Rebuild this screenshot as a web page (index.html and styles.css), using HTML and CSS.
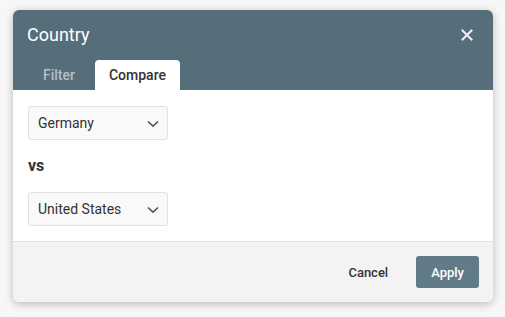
FILE: index.html
```html
<!DOCTYPE html>
<html>
<head>
<meta charset="utf-8">
<link rel="stylesheet" href="styles.css">
</head>
<body>
<div class="dialog">
  <div class="header">
    <div class="title-row">
      <span class="title">Country</span>
      <button class="close" aria-label="Close">
        <svg width="12" height="12" viewBox="0 0 12 12"><path d="M1.5 1.5L10.5 10.5M10.5 1.5L1.5 10.5" stroke="#eef1f3" stroke-width="2" stroke-linecap="square" fill="none"/></svg>
      </button>
    </div>
    <div class="tabs">
      <div class="tab">Filter</div>
      <div class="tab active">Compare</div>
    </div>
  </div>
  <div class="body">
    <div class="select"><span>Germany</span>
      <svg width="12" height="8" viewBox="0 0 12 8"><path d="M1 1.5L6 6.2L11 1.5" stroke="#555" stroke-width="1.6" fill="none"/></svg>
    </div>
    <div class="vs">vs</div>
    <div class="select"><span>United States</span>
      <svg width="12" height="8" viewBox="0 0 12 8"><path d="M1 1.5L6 6.2L11 1.5" stroke="#555" stroke-width="1.6" fill="none"/></svg>
    </div>
  </div>
  <div class="footer">
    <button class="btn cancel">Cancel</button>
    <button class="btn apply">Apply</button>
  </div>
</div>
</body>
</html>
```
FILE: styles.css
```css
html, body { margin: 0; }
body {
  background: #f7f7f7;
  font-family: Roboto, "Liberation Sans", sans-serif;
  padding: 10px 0 0 13px;
  width: 505px;
  height: 317px;
  box-sizing: border-box;
}
.dialog {
  width: 480px;
  border-radius: 6px;
  overflow: hidden;
  background: #fff;
  box-shadow: 0 2px 8px rgba(0,0,0,0.25);
}
.header {
  background: #566d7a;
  padding: 13px 0 0 0;
}
.title-row {
  display: flex;
  align-items: center;
  justify-content: space-between;
  padding: 0 20px 0 14px;
  height: 24px;
}
.title {
  color: #fff;
  font-size: 18px;
  line-height: 24px;
}
.close {
  background: none;
  border: 0;
  padding: 0;
  display: flex;
}
.tabs {
  display: flex;
  gap: 6px;
  padding: 13px 0 0 16px;
}
.tab {
  height: 30px;
  line-height: 30px;
  padding: 0 14px;
  font-size: 14px;
  font-weight: 500;
  color: #b3c0c7;
  border-radius: 4px 4px 0 0;
}
.tab.active {
  background: #fff;
  color: #333;
}
.body {
  padding: 16px 15px 15px;
  display: flex;
  flex-direction: column;
  align-items: flex-start;
}
.select {
  width: 140px;
  height: 34px;
  box-sizing: border-box;
  border: 1px solid #e2e2e2;
  border-radius: 3px;
  background: #f9f9f9;
  display: flex;
  align-items: center;
  justify-content: space-between;
  padding: 0 8px 0 9px;
  font-size: 14px;
  color: #333;
}
.select svg { margin-top: 1px; }
.vs {
  font-size: 16px;
  font-weight: 700;
  color: #333;
  line-height: 20px;
  margin: 16px 0 16px 0;
}
.footer {
  background: #f3f3f3;
  border-top: 1px solid #e2e2e2;
  height: 61px;
  box-sizing: border-box;
  display: flex;
  align-items: center;
  justify-content: flex-end;
  padding: 0 14px;
  gap: 13px;
}
.btn {
  font-family: inherit;
  font-size: 13px;
  font-weight: 500;
  height: 32px;
  padding: 0 15px;
  border: 0;
  border-radius: 3px;
}
.cancel { background: transparent; color: #333; }
.apply { background: #627b88; color: #fff; }
```
